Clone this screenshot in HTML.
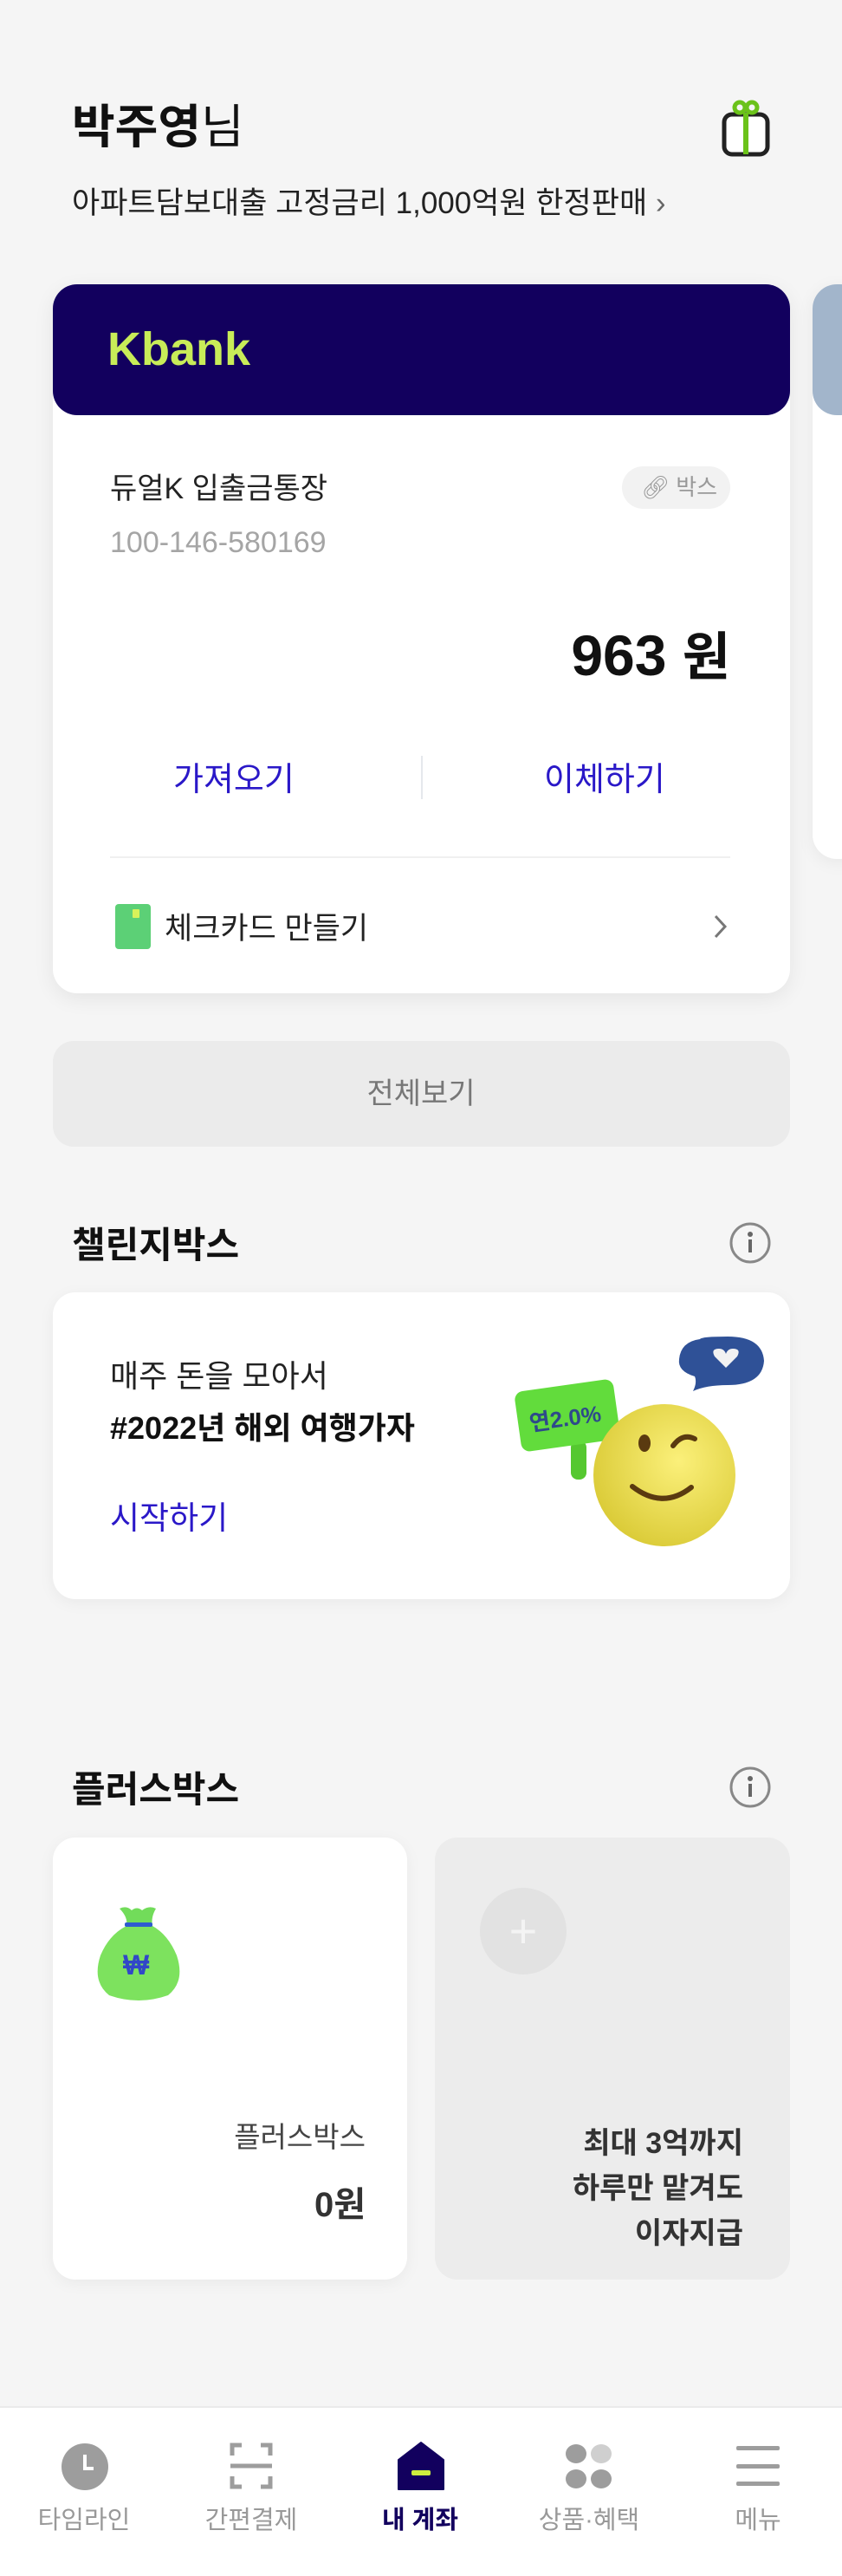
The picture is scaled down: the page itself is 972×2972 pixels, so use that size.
<!DOCTYPE html>
<html><head><meta charset="utf-8"><style>
*{margin:0;padding:0;box-sizing:border-box}
body{width:972px;height:2972px;background:#f5f5f5;font-family:"Liberation Sans","Noto Sans CJK KR",sans-serif;position:relative;overflow:hidden;color:#111}
.a{position:absolute}
.t{position:absolute;white-space:nowrap;line-height:1}
</style></head><body>
<div class="t" style="left:83px;top:120px;font-size:54px;font-weight:700">박주영<span style="font-weight:400">님</span></div>
<svg class="a" style="left:832px;top:114px" width="58" height="68" viewBox="0 0 58 68">
<rect x="4" y="18" width="50" height="46" rx="9" fill="#fff" stroke="#222" stroke-width="5"/>
<rect x="26" y="16" width="6" height="48" fill="#6bc21a"/>
<circle cx="22" cy="10" r="6" fill="none" stroke="#6bc21a" stroke-width="5"/>
<circle cx="36" cy="10" r="6" fill="none" stroke="#6bc21a" stroke-width="5"/>
</svg>
<div class="t" style="left:83px;top:217px;font-size:35px;color:#222">아파트담보대출 고정금리 1,000억원 한정판매 <span style="color:#666">›</span></div>

<div class="a" style="left:938px;top:328px;width:60px;height:663px;background:#fff;border-radius:28px;box-shadow:0 4px 20px rgba(0,0,0,.06)"></div>
<div class="a" style="left:938px;top:328px;width:60px;height:151px;background:#a2b5cb;border-radius:28px"></div>

<div class="a" style="left:61px;top:328px;width:851px;height:818px;background:#fff;border-radius:28px;box-shadow:0 6px 24px rgba(0,0,0,.07)"></div>
<div class="a" style="left:61px;top:328px;width:851px;height:151px;background:#12005e;border-radius:28px"></div>
<div class="t" style="left:124px;top:376px;font-size:54px;font-weight:700;color:#c8ec58;letter-spacing:0px">Kbank</div>
<div class="t" style="left:127px;top:547px;font-size:34px;color:#222">듀얼K 입출금통장</div>
<div class="a" style="left:718px;top:538px;width:125px;height:49px;background:#f2f2f2;border-radius:25px"></div>
<div class="t" style="left:740px;top:549px;font-size:26px;color:#999">🔗︎ 박스</div>
<div class="t" style="left:127px;top:609px;font-size:34px;color:#a5a5a5">100-146-580169</div>
<div class="t" style="right:129px;top:723px;font-size:66px;font-weight:700;color:#111">963 <span style="font-size:60px">원</span></div>
<div class="t" style="left:200px;top:881px;font-size:38px;color:#2a18c8">가져오기</div>
<div class="a" style="left:486px;top:872px;width:2px;height:50px;background:#e5e8ec"></div>
<div class="t" style="left:628px;top:881px;font-size:38px;color:#2a18c8">이체하기</div>
<div class="a" style="left:127px;top:988px;width:716px;height:2px;background:#f0f0f0"></div>
<div class="a" style="left:133px;top:1043px;width:41px;height:52px;background:#5cd076;border-radius:4px"></div>
<div class="a" style="left:153px;top:1049px;width:8px;height:10px;background:#d7f25a;border-radius:1px"></div>
<div class="t" style="left:190px;top:1054px;font-size:35px;color:#222">체크카드 만들기</div>
<svg class="a" style="left:822px;top:1054px" width="20" height="30"><path d="M4 3l11 12L4 27" fill="none" stroke="#777" stroke-width="3"/></svg>

<div class="a" style="left:61px;top:1201px;width:851px;height:122px;background:#ebebeb;border-radius:24px"></div>
<div class="t" style="left:0;width:972px;text-align:center;top:1245px;font-size:34px;color:#777">전체보기</div>

<div class="t" style="left:83px;top:1416px;font-size:42px;font-weight:700">챌린지박스</div>
<svg class="a" style="left:841px;top:1409px" width="50" height="50"><circle cx="25" cy="25" r="22" fill="none" stroke="#888" stroke-width="3"/><circle cx="25" cy="15" r="3" fill="#666"/><rect x="23" y="21" width="4" height="15" fill="#666"/></svg>

<div class="a" style="left:61px;top:1491px;width:851px;height:354px;background:#fff;border-radius:26px;box-shadow:0 4px 18px rgba(0,0,0,.05)"></div>
<div class="t" style="left:127px;top:1570px;font-size:36px;color:#222">매주 돈을 모아서</div>
<div class="t" style="left:127px;top:1630px;font-size:36px;font-weight:700;color:#111">#2022년 해외 여행가자</div>
<div class="t" style="left:127px;top:1733px;font-size:37px;color:#2a18c8">시작하기</div>
<svg class="a" style="left:580px;top:1520px" width="330" height="280" viewBox="0 0 330 280">
<defs><radialGradient id="g" cx="0.6" cy="0.4" r="0.7"><stop offset="0" stop-color="#fbf07a"/><stop offset="1" stop-color="#d8c832"/></radialGradient></defs>
<path d="M228 25 Q230 22 260 22 Q300 22 302 50 Q300 78 260 78 Q235 78 220 85 Q225 75 222 68 Q202 62 204 48 Q206 28 228 25Z" fill="#2f5197"/>
<path d="M258 58 L245 45 Q240 36 250 36 Q256 36 258 42 Q260 36 266 36 Q276 36 271 45Z" fill="#f2f2f2"/>
<rect x="79" y="142" width="18" height="45" rx="8" fill="#55c830"/>
<g transform="rotate(-8 75 110)"><rect x="17" y="78" width="115" height="70" rx="10" fill="#62dc3c"/><text x="30" y="125" font-size="26" font-weight="700" fill="#2e4a8a" font-family="Liberation Sans,Noto Sans CJK KR,sans-serif">연2.0%</text></g>
<circle cx="187" cy="182" r="82" fill="url(#g)"/>
<ellipse cx="164" cy="145" rx="7" ry="10" fill="#5a3a10"/>
<path d="M197 148 Q208 133 222 140" fill="none" stroke="#5a3a10" stroke-width="6" stroke-linecap="round"/>
<path d="M150 195 Q185 222 218 196" fill="none" stroke="#5a3a10" stroke-width="6" stroke-linecap="round"/>
</svg>

<div class="t" style="left:83px;top:2044px;font-size:42px;font-weight:700">플러스박스</div>
<svg class="a" style="left:841px;top:2037px" width="50" height="50"><circle cx="25" cy="25" r="22" fill="none" stroke="#888" stroke-width="3"/><circle cx="25" cy="15" r="3" fill="#666"/><rect x="23" y="21" width="4" height="15" fill="#666"/></svg>

<div class="a" style="left:61px;top:2120px;width:409px;height:510px;background:#fff;border-radius:26px;box-shadow:0 4px 18px rgba(0,0,0,.05)"></div>
<svg class="a" style="left:106px;top:2196px" width="108" height="118" viewBox="0 0 108 118">
<path d="M32 6 Q40 2 46 8 Q52 3 58 8 Q66 2 74 6 Q68 16 70 26 L40 26 Q42 16 32 6Z" fill="#72dc5a"/>
<path d="M40 26 Q20 36 10 60 Q0 90 20 106 Q54 118 88 106 Q108 90 98 60 Q88 36 70 26Z" fill="#7de25e"/>
<rect x="38" y="22" width="32" height="5" rx="2" fill="#2f5ad0"/>
<text x="36" y="82" font-size="32" font-weight="700" fill="#3147c8" font-family="Liberation Sans,sans-serif">₩</text>
</svg>
<div class="t" style="right:550px;top:2449px;font-size:33px;color:#444">플러스박스</div>
<div class="t" style="right:550px;top:2524px;font-size:40px;font-weight:700;color:#333">0원</div>

<div class="a" style="left:502px;top:2120px;width:410px;height:510px;background:#ececec;border-radius:26px"></div>
<div class="a" style="left:554px;top:2178px;width:100px;height:100px;background:#e2e2e2;border-radius:50%"></div>
<div class="t" style="left:554px;top:2200px;width:100px;text-align:center;font-size:56px;color:#f4f4f4;font-weight:300">+</div>
<div class="t" style="right:114px;top:2447px;font-size:34px;font-weight:700;color:#333;text-align:right;line-height:52px">최대 3억까지<br>하루만 맡겨도<br>이자지급</div>

<div class="a" style="left:0;top:2776px;width:972px;height:196px;background:#fff;border-top:2px solid #eaeaea"></div>
<svg class="a" style="left:70px;top:2818px" width="56" height="56"><circle cx="28" cy="28" r="27" fill="#9d9d9d"/><path d="M28 14v16h10" fill="none" stroke="#fff" stroke-width="4"/></svg>
<svg class="a" style="left:265px;top:2818px" width="50" height="54" fill="none" stroke="#9d9d9d" stroke-width="5"><path d="M14 3H3v12M36 3h11v12M14 51H3V39M36 51h11V39M1 27h48"/></svg>
<svg class="a" style="left:458px;top:2816px" width="56" height="58"><path d="M28 2 L54 22 V56 H2 V22Z" fill="#12005e" stroke="#12005e" stroke-width="2" stroke-linejoin="round"/><rect x="17" y="34" width="22" height="6" rx="2" fill="#cdee3f"/></svg>
<svg class="a" style="left:652px;top:2818px" width="56" height="56"><ellipse cx="13" cy="13" rx="12" ry="11" fill="#9d9d9d"/><ellipse cx="42" cy="13" rx="12" ry="11" fill="#cfcfcf"/><ellipse cx="13" cy="42" rx="12" ry="11" fill="#9d9d9d"/><ellipse cx="42" cy="42" rx="12" ry="11" fill="#9d9d9d"/></svg>
<svg class="a" style="left:850px;top:2820px" width="50" height="50" fill="#9d9d9d"><rect y="2" width="50" height="5" rx="2"/><rect y="23" width="50" height="5" rx="2"/><rect y="43" width="50" height="5" rx="2"/></svg>
<div class="t" style="left:37px;width:120px;text-align:center;top:2894px;font-size:29px;color:#999">타임라인</div>
<div class="t" style="left:230px;width:120px;text-align:center;top:2894px;font-size:29px;color:#999">간편결제</div>
<div class="t" style="left:425px;width:120px;text-align:center;top:2894px;font-size:29px;color:#12005e;font-weight:700">내 계좌</div>
<div class="t" style="left:610px;width:140px;text-align:center;top:2894px;font-size:29px;color:#999">상품·혜택</div>
<div class="t" style="left:815px;width:120px;text-align:center;top:2894px;font-size:29px;color:#999">메뉴</div>
</body></html>
